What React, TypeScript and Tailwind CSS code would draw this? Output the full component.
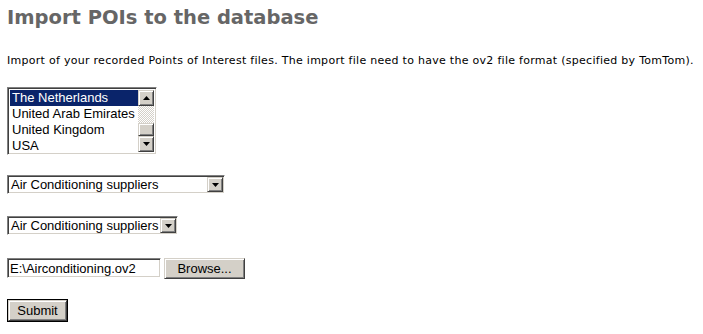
import React from "react";

const sunken =
  "border border-t-[#808080] border-l-[#808080] border-r-white border-b-white shadow-[inset_1px_1px_#404040,inset_-1px_-1px_#d4d0c8]";
const raised =
  "border border-t-[#d4d0c8] border-l-[#d4d0c8] border-r-[#404040] border-b-[#404040] shadow-[inset_1px_1px_#fff,inset_-1px_-1px_#808080] bg-[#d4d0c8]";

function Down() {
  return (
    <svg width="7" height="4" viewBox="0 0 7 4">
      <path d="M0 0h7L3.5 4z" fill="#000" />
    </svg>
  );
}
function Up() {
  return (
    <svg width="7" height="4" viewBox="0 0 7 4">
      <path d="M0 4h7L3.5 0z" fill="#000" />
    </svg>
  );
}

function SelectBox({ width }: { width: string }) {
  return (
    <div className={`${sunken} bg-white flex items-center h-[19px] ${width}`}>
      <span className="flex-1 pl-[3px] text-[13px] leading-[15px] text-black whitespace-nowrap">
        Air Conditioning suppliers
      </span>
      <div className={`${raised} w-[16px] h-[15px] mr-[1px] flex items-center justify-center`}>
        <Down />
      </div>
    </div>
  );
}

export default function App() {
  const items = ["The Netherlands", "United Arab Emirates", "United Kingdom", "USA"];
  return (
    <div className="bg-white w-[703px] h-[334px] px-[7px] pt-[6px] font-['Liberation_Sans',Arial,sans-serif]">
      <h1 className="font-['DejaVu_Sans',Verdana,sans-serif] font-bold text-[19.5px] leading-[24px] text-[#666666]">
        Import POIs to the database
      </h1>
      <p className="mt-[24px] font-['DejaVu_Sans',Verdana,sans-serif] text-[11px] tracking-[0.28px] leading-[14px] text-black whitespace-nowrap">
        Import of your recorded Points of Interest files. The import file need to have the ov2 file format (specified by TomTom).
      </p>

      <div className={`${sunken} mt-[19px] w-[150px] h-[68px] bg-white flex p-[2px]`}>
        <div className="flex-1 flex flex-col">
          {items.map((it, i) => (
            <div
              key={it}
              className={`h-[16px] pl-[2px] text-[13px] leading-[16px] whitespace-nowrap ${
                i === 0 ? "bg-[#0a246a] text-white" : "text-black"
              }`}
            >
              {it}
            </div>
          ))}
        </div>
        <div className="w-[16px] flex flex-col">
          <div className={`${raised} h-[16px] flex items-center justify-center`}>
            <Up />
          </div>
          <div className="h-[18px] bg-[repeating-conic-gradient(#d4d0c8_0_25%,#fff_0_50%)] bg-[length:2px_2px]" />
          <div className={`${raised} h-[14px]`} />
          <div className={`${raised} h-[16px] flex items-center justify-center`}>
            <Down />
          </div>
        </div>
      </div>

      <div className="mt-[20px]">
        <SelectBox width="w-[218px]" />
      </div>
      <div className="mt-[22px]">
        <SelectBox width="w-[171px]" />
      </div>

      <div className="mt-[23px] flex items-start gap-[3px]">
        <div className={`${sunken} bg-white w-[154px] h-[20px] flex items-center pl-[2px] text-[13px] leading-[15px] text-black`}>
          E:\Airconditioning.ov2
        </div>
        <div className={`${raised} w-[81px] h-[21px] flex items-center justify-center text-[13px] leading-[15px] text-black`}>
          Browse...
        </div>
      </div>

      <div className="mt-[20px] w-[61px] h-[23px] border border-black">
        <div className={`${raised} w-full h-full flex items-center justify-center text-[13px] leading-[15px] text-black`}>
          Submit
        </div>
      </div>
    </div>
  );
}
